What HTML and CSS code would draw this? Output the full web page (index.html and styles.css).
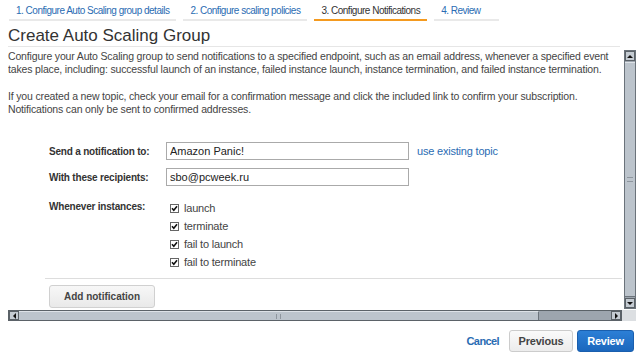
FILE: index.html
```html
<html>
<head>
  <link rel="stylesheet" href="styles.css">
</head>
<body>
  <div class="tabs">
    <div class="tab">1. Configure Auto Scaling group details</div>
    <div class="tab">2. Configure scaling policies</div>
    <div class="tab active">3. Configure Notifications</div>
    <div class="tab tab-last">4. Review</div>
  </div>

  <h1 class="title">Create Auto Scaling Group</h1>

  <div class="frame">
    <div class="frame-row">
      <div class="content">
        <p>Configure your Auto Scaling group to send notifications to a specified endpoint, such as an email address, whenever a specified event<br>takes place, including: successful launch of an instance, failed instance launch, instance termination, and failed instance termination.</p>
        <p>If you created a new topic, check your email for a confirmation message and click the included link to confirm your subscription.<br>Notifications can only be sent to confirmed addresses.</p>

        <div class="form">
          <div class="label">Send a notification to:</div>
          <input class="field" value="Amazon Panic!">
          <a class="link" href="#">use existing topic</a>

          <div class="label">With these recipients:</div>
          <input class="field" value="sbo@pcweek.ru">
          <div></div>

          <div class="label label-top">Whenever instances:</div>
          <div class="checks">
            <div class="check"><svg class="box" width="9" height="9" viewBox="0 0 9 9"><rect x="0.5" y="0.5" width="8" height="8" fill="#fff" stroke="#666"/><path d="M2 4.2 L3.8 6.2 L7 2.2" fill="none" stroke="#111" stroke-width="1.6"/></svg>launch</div>
            <div class="check"><svg class="box" width="9" height="9" viewBox="0 0 9 9"><rect x="0.5" y="0.5" width="8" height="8" fill="#fff" stroke="#666"/><path d="M2 4.2 L3.8 6.2 L7 2.2" fill="none" stroke="#111" stroke-width="1.6"/></svg>terminate</div>
            <div class="check"><svg class="box" width="9" height="9" viewBox="0 0 9 9"><rect x="0.5" y="0.5" width="8" height="8" fill="#fff" stroke="#666"/><path d="M2 4.2 L3.8 6.2 L7 2.2" fill="none" stroke="#111" stroke-width="1.6"/></svg>fail to launch</div>
            <div class="check"><svg class="box" width="9" height="9" viewBox="0 0 9 9"><rect x="0.5" y="0.5" width="8" height="8" fill="#fff" stroke="#666"/><path d="M2 4.2 L3.8 6.2 L7 2.2" fill="none" stroke="#111" stroke-width="1.6"/></svg>fail to terminate</div>
          </div>
          <div></div>
        </div>

        <div class="add-bar">
          <button class="btn-add">Add notification</button>
        </div>
      </div>

      <div class="vscroll">
        <div class="arrow"><span class="tri-up"></span></div>
        <div class="vthumb"><span class="vgrip"></span></div>
        <div class="arrow"><span class="tri-down"></span></div>
      </div>
    </div>

    <div class="hrow">
      <div class="hscroll">
        <div class="arrow"><span class="tri-left"></span></div>
        <div class="hthumb"><span class="hgrip"></span></div>
        <div class="htrough"></div>
        <div class="arrow"><span class="tri-right"></span></div>
      </div>
      <div class="corner"></div>
    </div>
  </div>

  <div class="footer">
    <a class="cancel" href="#">Cancel</a>
    <button class="btn-prev">Previous</button>
    <button class="btn-review">Review</button>
  </div>
</body>
</html>
```

FILE: styles.css
```css
body {
	margin: 0;
	background: #fff;
	color: #444;
	font-family: "Liberation Sans", Arial, sans-serif;
}

.tabs {
	display: flex;
	gap: 7px;
	padding: 3px 0 0 9px;
}
.tab {
	padding: 0 7px;
	height: 16px;
	line-height: 15px;
	font-size: 10px;
	letter-spacing: -0.5px;
	color: #2a6cb3;
	border-bottom: 2px solid #e9e9e9;
}
.tab.active {
	color: #333;
	border-bottom-color: #f49a1f;
}
.tab-last {
	padding-right: 18px;
}

.title {
	margin: 0 20px 0 8px;
	padding-top: 5px;
	font-size: 17px;
	line-height: 20px;
	font-weight: normal;
	color: #333;
	border-bottom: 1px solid #e6e6e6;
}

.frame {
	margin-left: 8px;
	width: 628px;
}
.frame-row {
	display: flex;
	height: 263px;
}
.content {
	width: 614px;
	overflow: hidden;
	padding-top: 3px;
	font-size: 12px;
}
.content p {
	margin: 0 0 14px;
	font-size: 10.5px;
	line-height: 13px;
	letter-spacing: -0.16px;
	white-space: nowrap;
	color: #444;
}

.form {
	display: grid;
	grid-template-columns: 117px 243px auto;
	row-gap: 8px;
	align-items: center;
	margin-top: 26px;
	padding-left: 41px;
}
.label {
	font-size: 10px;
	font-weight: bold;
	letter-spacing: -0.2px;
	color: #333;
}
.label-top {
	align-self: start;
	margin-top: 5px;
	line-height: 16px;
}
.field {
	height: 18px;
	box-sizing: border-box;
	border: 1px solid #aaa;
	padding: 0 3px;
	font-family: "Liberation Sans", Arial, sans-serif;
	font-size: 11px;
	color: #222;
}
.link {
	margin-left: 8px;
	font-size: 11px;
	letter-spacing: -0.2px;
	color: #2a6cb3;
	text-decoration: none;
}
.checks {
	margin-top: 5px;
}
.check {
	display: flex;
	align-items: center;
	height: 18px;
	padding-left: 4px;
	font-size: 11px;
	letter-spacing: -0.2px;
	color: #444;
}
.box {
	margin-right: 5px;
}

.add-bar {
	margin: 7px 0 0 37px;
	padding-top: 6px;
	border-top: 1px solid #ddd;
}
.btn-add {
	margin-left: 4px;
	width: 106px;
	height: 23px;
	border: 1px solid #d0d0d0;
	border-radius: 3px;
	background: linear-gradient(#f7f7f7, #e9e9e9);
	font-family: inherit;
	font-size: 10px;
	font-weight: bold;
	color: #444;
}

/* fake motif scrollbars */
.vscroll {
	display: flex;
	flex-direction: column;
	margin: 3px 0 0 2px;
	width: 12px;
	height: 259px;
	box-sizing: border-box;
	background: #9da5ae;
	border: 1px solid #6b737b;
}
.arrow {
	display: flex;
	align-items: center;
	justify-content: center;
	width: 10px;
	height: 10px;
	background: #c4cbd2;
	box-sizing: border-box;
	border: 1px solid #5b6268;
}
.vthumb {
	flex: 1;
	margin: 1px 0;
	display: flex;
	align-items: center;
	justify-content: center;
	background: #bcc4cc;
	border-top: 1px solid #dde2e7;
	border-bottom: 1px solid #6b737b;
}
.vgrip {
	width: 6px;
	height: 3px;
	border-top: 1px solid #8e969e;
	border-bottom: 1px solid #8e969e;
}
.tri-up, .tri-down, .tri-left, .tri-right {
	width: 0;
	height: 0;
	border: 3px solid transparent;
}
.tri-up { border-bottom-color: #111; margin-top: -3px; }
.tri-down { border-top-color: #111; margin-bottom: -3px; }
.tri-left { border-right-color: #111; margin-left: -3px; }
.tri-right { border-left-color: #111; margin-right: -3px; }

.hrow {
	display: flex;
	height: 11px;
}
.hscroll {
	display: flex;
	width: 614px;
	height: 11px;
	box-sizing: border-box;
	background: #9da5ae;
	border: 1px solid #5b6268;
}
.hscroll .arrow {
	width: 10px;
	height: 9px;
}
.hthumb {
	width: 519px;
	display: flex;
	align-items: center;
	justify-content: center;
	background: #bcc4cc;
	border-top: 1px solid #dde2e7;
	border-right: 1px solid #6b737b;
}
.hgrip {
	width: 3px;
	height: 5px;
	border-left: 1px solid #8e969e;
	border-right: 1px solid #8e969e;
}
.htrough {
	flex: 1;
}
.corner {
	width: 14px;
	background: #dcdfe2;
}

.footer {
	display: flex;
	align-items: center;
	justify-content: flex-end;
	gap: 4px;
	margin-top: 9px;
	padding-right: 6px;
}
.cancel {
	margin-right: 6px;
	font-size: 11px;
	font-weight: bold;
	letter-spacing: -0.6px;
	color: #2a6cb3;
	text-decoration: none;
}
.btn-prev, .btn-review {
	height: 22px;
	border-radius: 3px;
	font-family: inherit;
	font-size: 11px;
	font-weight: bold;
	letter-spacing: -0.2px;
}
.btn-prev {
	width: 64px;
	border: 1px solid #ccc;
	background: linear-gradient(#fafafa, #ececec);
	color: #444;
}
.btn-review {
	width: 57px;
	border: 1px solid #1a5fae;
	background: linear-gradient(#2c7fd6, #1b67bd);
	color: #fff;
}
```
